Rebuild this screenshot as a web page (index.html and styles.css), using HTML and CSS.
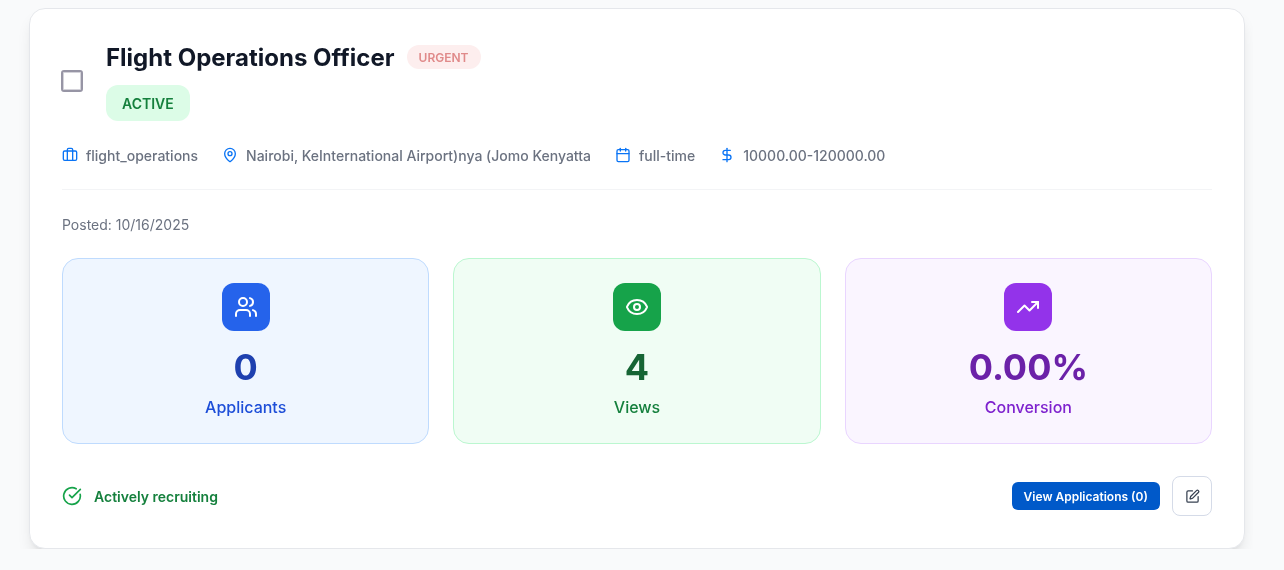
FILE: index.html
```html
<!DOCTYPE html>
<html>
<head>
  <meta charset="UTF-8">
  <title>Job card</title>
  <link rel="stylesheet" href="styles.css">
</head>
<body>
  <div class="page">
    <div class="card">
      <div class="head">
        <input type="checkbox" class="check">
        <div>
          <div class="title-row">
            <h2 class="drop">Flight Operations Officer</h2>
            <span class="urgent">URGENT</span>
          </div>
          <span class="status">ACTIVE</span>
        </div>
      </div>

      <div class="meta">
        <div class="meta-item">
          <svg class="meta-icon" viewBox="0 0 24 24"><path d="M16 20V4a2 2 0 0 0-2-2h-4a2 2 0 0 0-2 2v16"/><rect x="2" y="6" width="20" height="14" rx="2"/></svg>
          <span class="drop">flight_operations</span>
        </div>
        <div class="meta-item">
          <svg class="meta-icon" viewBox="0 0 24 24"><path d="M20 10c0 5-5.5 10.2-7.4 11.8a1 1 0 0 1-1.2 0C9.500 20.200 4 15 4 10a8 8 0 0 1 16 0"/><circle cx="12" cy="10" r="3"/></svg>
          <span class="drop">Nairobi, KeInternational Airport)nya (Jomo Kenyatta</span>
        </div>
        <div class="meta-item">
          <svg class="meta-icon" viewBox="0 0 24 24"><path d="M8 2v4"/><path d="M16 2v4"/><rect x="3" y="4" width="18" height="18" rx="2"/><path d="M3 10h18"/></svg>
          <span class="drop">full-time</span>
        </div>
        <div class="meta-item">
          <svg class="meta-icon" viewBox="0 0 24 24"><path d="M12 2v20"/><path d="M17 5H9.500a3.500 3.500 0 0 0 0 7h5a3.500 3.500 0 0 1 0 7H6"/></svg>
          <span class="drop">10000.00-120000.00</span>
        </div>
      </div>

      <p class="posted">Posted: 10/16/2025</p>

      <div class="stats">
        <div class="stat stat-blue">
          <div class="stat-icon">
            <svg viewBox="0 0 24 24"><path d="M16 21v-2a4 4 0 0 0-4-4H6a4 4 0 0 0-4 4v2"/><circle cx="9" cy="7" r="4"/><path d="M22 21v-2a4 4 0 0 0-3-3.870"/><path d="M16 3.130a4 4 0 0 1 0 7.750"/></svg>
          </div>
          <div class="stat-value">0</div>
          <div class="stat-label">Applicants</div>
        </div>
        <div class="stat stat-green">
          <div class="stat-icon">
            <svg viewBox="0 0 24 24"><path d="M2.060 12.350a1 1 0 0 1 0-.7 10.750 10.750 0 0 1 19.880 0 1 1 0 0 1 0 .7 10.750 10.750 0 0 1-19.880 0"/><circle cx="12" cy="12" r="3"/></svg>
          </div>
          <div class="stat-value">4</div>
          <div class="stat-label">Views</div>
        </div>
        <div class="stat stat-purple">
          <div class="stat-icon">
            <svg viewBox="0 0 24 24"><path d="M22 7l-8.500 8.500-5-5L2 17"/><path d="M16 7h6v6"/></svg>
          </div>
          <div class="stat-value">0.00%</div>
          <div class="stat-label">Conversion</div>
        </div>
      </div>

      <div class="foot">
        <div class="recruiting">
          <svg viewBox="0 0 24 24"><path d="M21.800 10A10 10 0 1 1 17 3.340"/><path d="M9 11l3 3L22 4"/></svg>
          <span class="drop">Actively recruiting</span>
        </div>
        <div class="actions">
          <button class="btn-view">View Applications (0)</button>
          <button class="btn-edit">
            <svg viewBox="0 0 24 24"><path d="M12 3H5a2 2 0 0 0-2 2v14a2 2 0 0 0 2 2h14a2 2 0 0 0 2-2v-7"/><path d="M18.375 2.625a1 1 0 0 1 3 3l-9.013 9.014a2 2 0 0 1-.853.505l-2.873.84a.5.5 0 0 1-.62-.62l.84-2.873a2 2 0 0 1 .506-.852z"/></svg>
          </button>
        </div>
      </div>
    </div>
  </div>
</body>
</html>
```

FILE: styles.css
```css
* {
  box-sizing: border-box;
}
html, body {
  height: 100%;
}
body {
  margin: 0;
  font-family: Inter, "Liberation Sans", sans-serif;
  background-color: #f9fafb;
  overflow: hidden;
}
svg {
  fill: none;
  stroke: currentColor;
  stroke-width: 2;
  stroke-linecap: round;
  stroke-linejoin: round;
  display: block;
}
.drop {
  padding-top: 1px;
  margin-bottom: -1px;
}
.page {
  width: 1253px;
  height: 549px;
  padding: 8px 8px 0 29px;
  overflow: hidden;
}
.card {
  width: 1216px;
  height: 541px;
  padding: 32px;
  background-color: #fff;
  border: 1px solid #e5e7eb;
  border-radius: 16px;
  box-shadow: 0 10px 15px -3px rgba(0, 0, 0, 0.1), 0 4px 6px -4px rgba(0, 0, 0, 0.1);
  will-change: transform;
}
.head {
  display: flex;
  align-items: center;
  gap: 23px;
}
.check {
  width: 22px;
  height: 22px;
  margin: 0 0 0 -1px;
  appearance: none;
  border: 2px solid #9795a5;
  border-radius: 3px;
  box-shadow: inset 0 0 0 1px #d4d3da;
}
.title-row {
  display: flex;
  align-items: center;
  gap: 12px;
  margin-bottom: 12px;
}
h2 {
  margin: 0;
  font-size: 24px;
  line-height: 32px;
  font-weight: 700;
  color: #111827;
}
.urgent {
  padding: 5px 12px 3px;
  font-size: 12px;
  line-height: 16px;
  font-weight: 600;
  color: #e08a8a;
  background-color: #fdeeee;
  border-radius: 999px;
}
.status {
  display: inline-block;
  padding: 9px 16px 7px;
  font-size: 14px;
  line-height: 20px;
  font-weight: 600;
  color: #15803d;
  background-color: #dcfce7;
  border-radius: 12px;
}
.meta {
  display: flex;
  gap: 24px;
  margin-top: 24px;
  padding-bottom: 24px;
  border-bottom: 1px solid #f3f4f6;
  font-size: 14px;
  line-height: 20px;
  font-weight: 500;
  color: #6b7280;
}
.meta-item {
  display: flex;
  align-items: center;
  gap: 8px;
}
.meta-icon {
  width: 16px;
  height: 16px;
  color: #0a74f5;
}
.posted {
  margin: 25px 0 23px;
  font-size: 14px;
  line-height: 20px;
  color: #6b7280;
}
.stats {
  display: grid;
  grid-template-columns: repeat(3, 1fr);
  gap: 24px;
}
.stat {
  height: 186px;
  padding-top: 24px;
  border: 1px solid;
  border-radius: 16px;
  text-align: center;
}
.stat-icon {
  display: flex;
  align-items: center;
  justify-content: center;
  width: 48px;
  height: 48px;
  margin: 0 auto 16px;
  color: #fff;
  border-radius: 12px;
}
.stat-icon svg {
  width: 24px;
  height: 24px;
}
.stat-value {
  font-size: 36px;
  line-height: 40px;
  font-weight: 700;
  margin-bottom: 8px;
}
.stat-label {
  font-size: 16px;
  line-height: 24px;
  font-weight: 500;
}
.stat-blue {
  background-color: #eff6ff;
  border-color: #bfdbfe;
}
.stat-blue .stat-icon {
  background-color: #2563eb;
}
.stat-blue .stat-value {
  color: #1e40af;
}
.stat-blue .stat-label {
  color: #1d4ed8;
}
.stat-green {
  background-color: #f0fdf4;
  border-color: #bbf7d0;
}
.stat-green .stat-icon {
  background-color: #16a34a;
}
.stat-green .stat-value {
  color: #166534;
}
.stat-green .stat-label {
  color: #15803d;
}
.stat-purple {
  background-color: #faf5ff;
  border-color: #e9d5ff;
}
.stat-purple .stat-icon {
  background-color: #9333ea;
}
.stat-purple .stat-value {
  color: #6b21a8;
}
.stat-purple .stat-label {
  color: #7e22ce;
}
.foot {
  display: flex;
  align-items: center;
  justify-content: space-between;
  margin-top: 32px;
}
.recruiting {
  display: flex;
  align-items: center;
  gap: 12px;
  font-size: 14px;
  line-height: 20px;
  font-weight: 600;
  color: #15803d;
}
.recruiting svg {
  width: 20px;
  height: 20px;
  color: #16a34a;
}
.actions {
  display: flex;
  align-items: center;
  gap: 12px;
}
.btn-view {
  height: 28px;
  padding: 0 12px;
  font-family: inherit;
  font-size: 12px;
  font-weight: 600;
  color: #fff;
  background-color: #0059c9;
  border: none;
  border-radius: 6px;
}
.btn-edit {
  display: flex;
  align-items: center;
  justify-content: center;
  width: 40px;
  height: 40px;
  padding: 0;
  color: #374151;
  background-color: #fff;
  border: 1px solid #d5dbe8;
  border-radius: 8px;
}
.btn-edit svg {
  width: 15px;
  height: 15px;
}
```
